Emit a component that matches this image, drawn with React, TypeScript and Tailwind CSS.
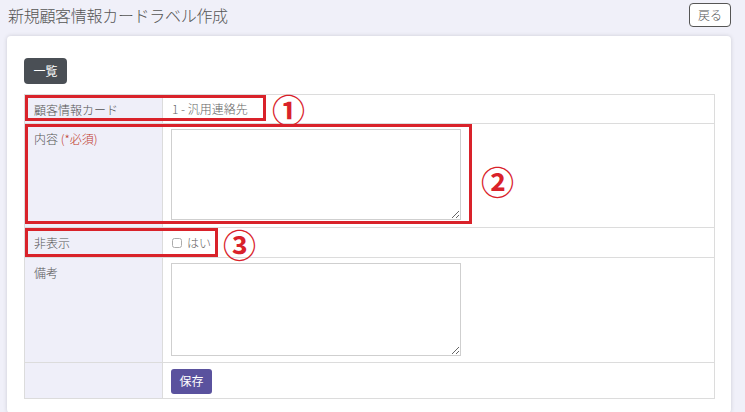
const font = { fontFamily: '"Noto Sans CJK JP", "Noto Sans", sans-serif' }

const Label = ({ children }: { children: React.ReactNode }) => (
  <td className="w-[138px] bg-[#efeff9] border border-[#dcdcdc] align-top px-[9px] pt-[6px] text-[12px] font-light text-[#555]">
    {children}
  </td>
)

const App = () => {
  return (
    <div className="min-h-[412px] bg-[#f0f0f9] text-[#555]" style={font}>
      <div className="flex items-start justify-between h-[36px] pl-[8px] pr-[14px]">
        <h1 className="mt-[4px] leading-[22px] text-[16px] font-light text-[#555] tracking-[-0.3px]">新規顧客情報カードラベル作成</h1>
        <button className="mt-[3px] h-[24px] w-[42px] text-[12px] font-light border border-[#555] rounded-[4px] bg-white text-[#555]">戻る</button>
      </div>
      <div className="ml-[7px] w-[724px] bg-white rounded-[4px] shadow-[0_0_4px_rgba(0,0,0,0.15)] pl-[17px] pr-[16px] pt-[21px] pb-[14px]">
        <button className="h-[26px] w-[43px] bg-[#4a4f55] text-white text-[12px] rounded-[4px]">一覧</button>
        <div className="relative mt-[10px]">
          <table className="w-full border-collapse">
            <tbody>
              <tr className="h-[29px]">
                <Label>顧客情報カード</Label>
                <td className="border border-[#dcdcdc] px-[9px] text-[12px] font-light text-[#666]">1 - 汎用連絡先</td>
              </tr>
              <tr className="h-[104px]">
                <Label>
                  内容 <span className="text-[#c0392b]">(*必須)</span>
                </Label>
                <td className="border border-[#dcdcdc] align-top px-[8px] pt-[5px]">
                  <textarea className="block w-[290px] h-[91px] border border-[#cfcfcf] resize-y" />
                </td>
              </tr>
              <tr className="h-[30px]">
                <Label>非表示</Label>
                <td className="border border-[#dcdcdc] px-[9px] text-[12px] font-light text-[#666]">
                  <label className="flex items-center gap-[5px]">
                    <input type="checkbox" className="w-[10px] h-[10px] m-0 opacity-60" />
                    はい
                  </label>
                </td>
              </tr>
              <tr className="h-[105px]">
                <Label>備考</Label>
                <td className="border border-[#dcdcdc] align-top px-[8px] pt-[5px]">
                  <textarea className="block w-[290px] h-[93px] border border-[#cfcfcf] resize-y" />
                </td>
              </tr>
              <tr className="h-[36px]">
                <td className="bg-[#efeff9] border border-[#dcdcdc]" />
                <td className="border border-[#dcdcdc] px-[8px]">
                  <button className="h-[25px] w-[41px] bg-[#5a529e] text-white text-[12px] rounded-[3px]">保存</button>
                </td>
              </tr>
            </tbody>
          </table>

          <div className="absolute left-[1px] top-[1px] w-[241px] h-[26px] border-[3px] border-[#d9222a]" />
          <div className="absolute left-[1px] top-[30px] w-[447px] h-[100px] border-[3px] border-[#d9222a]" />
          <div className="absolute left-[1px] top-[134px] w-[193px] h-[29px] border-[3px] border-[#d9222a]" />

          <span className="absolute left-[248px] top-[-3px] text-[33px] font-bold leading-[36px] text-[#d9222a]">①</span>
          <span className="absolute left-[457px] top-[69px] text-[33px] font-bold leading-[36px] text-[#d9222a]">②</span>
          <span className="absolute left-[199px] top-[132px] text-[33px] font-bold leading-[36px] text-[#d9222a]">③</span>
        </div>
      </div>
    </div>
  )
}

export default App
